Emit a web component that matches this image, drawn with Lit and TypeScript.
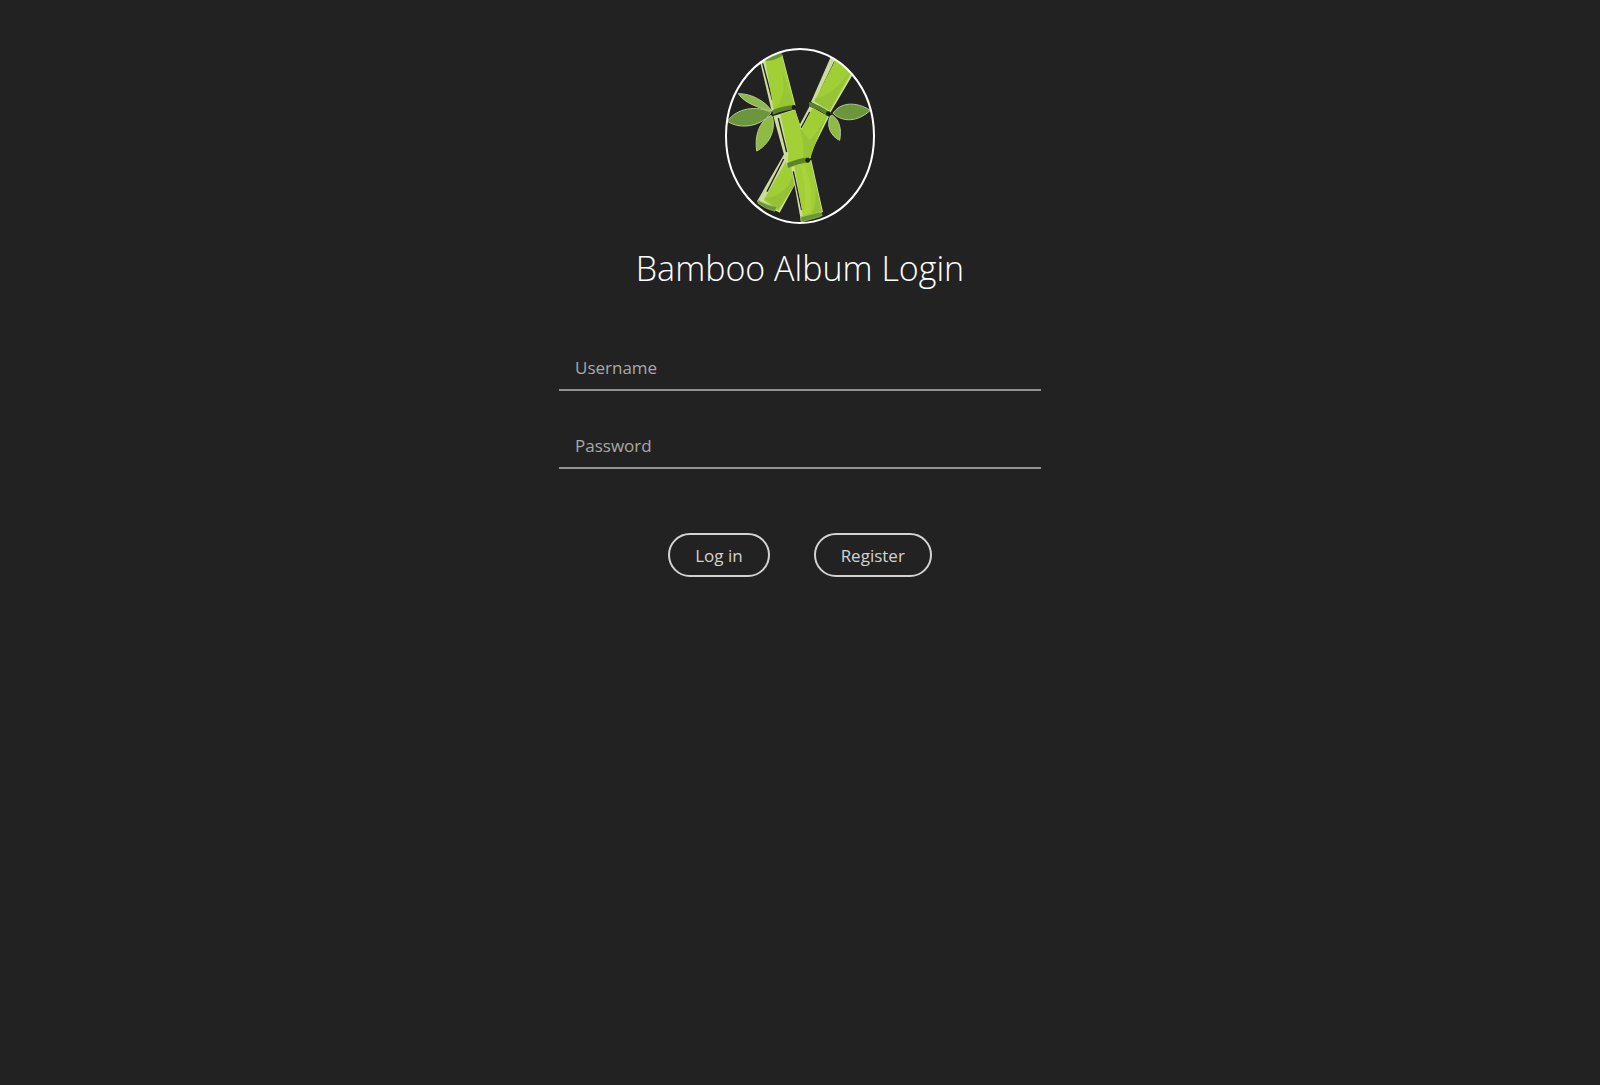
import { LitElement, html, css, svg } from "lit";
import { customElement } from "lit/decorators.js";

const bambooLogo = svg`
  <defs>
    <clipPath id="oval"><ellipse cx="255" cy="288" rx="221" ry="260" /></clipPath>
  </defs>
  <g clip-path="url(#oval)">
    <!-- leaves -->
    <g stroke="#b4cc92" stroke-width="3" stroke-linejoin="round">
      <path fill="#8fb94a" d="M70 161 C108 160 152 184 171 214 C138 206 88 190 70 161Z" />
      <path fill="#6b963c" d="M37 244 C66 203 125 196 168 217 C146 256 80 272 37 244Z" />
      <path fill="#8fbb45" d="M168 226 C130 246 119 290 125 333 C160 315 184 274 172 230Z" />
      <path fill="#6b963c" d="M354 220 C376 186 424 184 466 211 C428 246 384 248 354 220Z" />
      <path fill="#8fbb45" d="M346 228 C332 258 349 290 374 301 C380 268 374 240 352 226Z" />
    </g>
    <!-- right stalk -->
    <path fill="#ccdc9e" d="M350 44 L288 186 L346 218 L418 96 L400 40Z" />
    <path stroke="#222" stroke-width="4" d="M359 65 L317 152" />
    <path fill="#a0ce35" d="M366 50 L298 184 L344 212 L414 92 L398 40Z" />
    <path fill="#97c435" d="M408 92 C379 121 357 165 302 174 L298 184 L344 212Z" />
    <path fill="#ccdc9e" d="M284 198 L204 348 L126 484 L194 518 L244 426 L342 230Z" />
    <path stroke="#222" stroke-width="4" d="M284 216 L258 264 M206 357 L156 455" />
    <path fill="#a0ce35" d="M292 204 L214 362 L146 480 L191 512 L241 428 L338 228Z" />
    <path fill="#95c235" d="M334 230 C310 272 286 304 264 310 L250 390 L285 345Z M232 408 C220 448 194 468 150 476 L190 508 L238 436Z" />
    <path fill="#5c8426" d="M282 186 Q314 194 346 218 L341 230 Q310 206 283 200Z" />
    <circle cx="340" cy="221" r="7" fill="#18200e" />
    <path fill="#6a9634" stroke="#a9c76b" stroke-width="2" d="M129 480 Q154 497 187 500 L179 514 Q150 506 129 490Z" />
    <!-- left stalk -->
    <path fill="#ccdc9e" d="M134 60 L170 214 L242 198 L202 44Z" />
    <path stroke="#222" stroke-width="4" d="M143 70 L172 180" />
    <path fill="#a2cf35" d="M151 60 L176 212 L239 196 L200 45Z" />
    <path fill="#98c635" d="M201 90 C210 140 207 177 180 206 L237 194Z" />
    <path fill="#67962d" d="M149 53 L200 38 L201 48 Q176 64 151 62Z" />
    <path fill="#ccdc9e" d="M175 228 L208 348 L216 378 L288 354 L240 208Z" />
    <path stroke="#222" stroke-width="4" d="M190 234 L215 336" />
    <path fill="#a4d037" d="M196 223 L220 340 L218 372 L286 354 L316 268 L258 268 L240 210Z" />
    <path fill="#97c535" d="M252 262 C266 300 268 335 262 360 L285 352 L318 262 L284 300Z" />
    <path fill="#ccdc9e" d="M229 382 L258 544 L324 516 L289 360Z" />
    <path stroke="#222" stroke-width="4" d="M235 394 L260 510" />
    <path fill="#a2cf35" d="M238 378 L264 532 L321 516 L287 362Z" />
    <path fill="#abd43c" d="M255 378 C272 422 276 480 262 526 L286 518 C293 460 284 410 266 374Z" />
    <path fill="#93c135" d="M297 410 C306 456 304 502 288 523 L320 512Z" />
    <path fill="#5c8426" d="M172 211 Q207 196 240 196 L242 208 Q207 210 174 224Z" />
    <path fill="#5c8426" d="M216 370 Q250 355 282 352 L284 367 Q248 371 219 384Z" />
    <circle cx="237" cy="202" r="7" fill="#18200e" />
    <circle cx="278" cy="361" r="7" fill="#18200e" />
    <path fill="#6a9634" stroke="#a9c76b" stroke-width="2" d="M257 531 L315 516 L322 526 L312 531 L258 546Z" />
  </g>
  <ellipse cx="255" cy="288" rx="222" ry="261" fill="none" stroke="#fff" stroke-width="6" />
`;

@customElement("app-root")
export class AppRoot extends LitElement {
  static styles = css`
    :host {
      display: block;
      min-height: 100vh;
      box-sizing: border-box;
      padding: 48px 16px;
      background: #222;
      color: #fff;
      font-family: "Segoe UI", "Open Sans", "Noto Sans", sans-serif;
    }
    .login {
      display: flex;
      flex-direction: column;
      align-items: center;
      max-width: 482px;
      margin: 0 auto;
    }
    .logo {
      display: block;
      width: 150px;
      height: 176px;
    }
    .title {
      margin: 20px 0 0;
      font-size: 34px;
      line-height: 48px;
      font-weight: 300;
      text-align: center;
    }
    .form {
      width: 100%;
      margin-top: 53px;
    }
    .field {
      display: block;
      box-sizing: border-box;
      width: 100%;
      height: 46px;
      margin-bottom: 32px;
      padding: 0 16px;
      border: 0;
      border-bottom: 2px solid #919191;
      border-radius: 0;
      outline: none;
      background: transparent;
      color: #d3d3d3;
      font: inherit;
      font-size: 17px;
    }
    .field::placeholder {
      color: #a9a9a9;
      opacity: 1;
    }
    .actions {
      display: flex;
      flex-wrap: wrap;
      justify-content: center;
      gap: 44px;
      margin-top: 64px;
    }
    .button {
      height: 44px;
      padding: 0 25px;
      border: 2px solid #d3d3d3;
      border-radius: 22px;
      background: transparent;
      color: #d3d3d3;
      font: inherit;
      font-size: 17px;
      cursor: pointer;
    }
    .field:focus {
      border-color: #fff;
    }
    .button:hover {
      border-color: #fff;
      color: #fff;
    }
  `;

  render() {
    return html`
      <main class="login">
        <svg class="logo" viewBox="30 24 450 528" role="img" aria-label="Bamboo">${bambooLogo}</svg>
        <h1 class="title">Bamboo Album Login</h1>
        <form class="form" @submit=${(e: Event) => e.preventDefault()}>
          <input class="field" type="text" name="username" placeholder="Username" aria-label="Username" autocomplete="username" />
          <input class="field" type="password" name="password" placeholder="Password" aria-label="Password" autocomplete="current-password" />
          <div class="actions">
            <button class="button" type="submit">Log in</button>
            <button class="button" type="button">Register</button>
          </div>
        </form>
      </main>
    `;
  }
}
